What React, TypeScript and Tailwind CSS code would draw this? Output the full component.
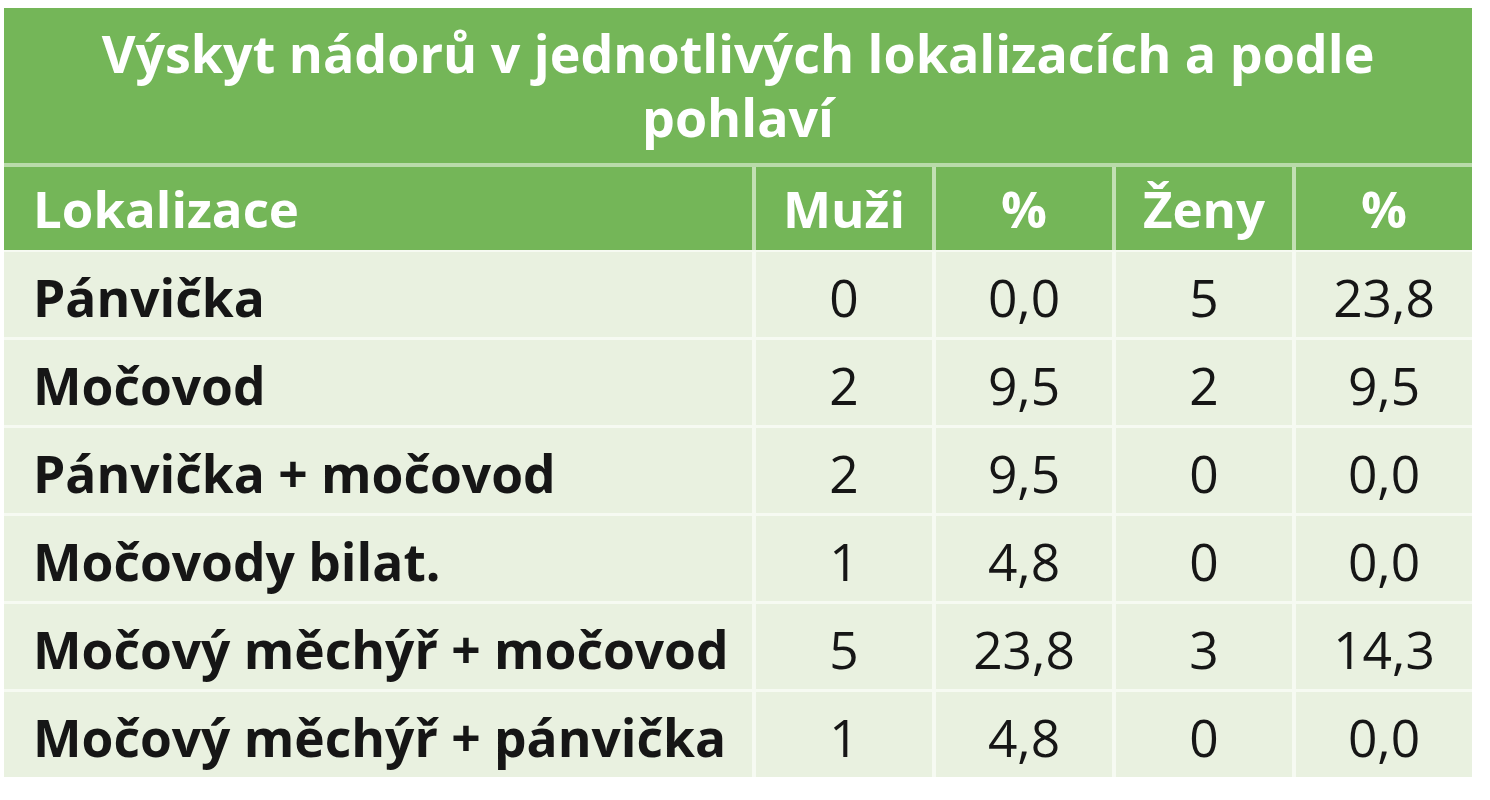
const rows = [
  { name: 'Pánvička', m: '0', mp: '0,0', z: '5', zp: '23,8' },
  { name: 'Močovod', m: '2', mp: '9,5', z: '2', zp: '9,5' },
  { name: 'Pánvička + močovod', m: '2', mp: '9,5', z: '0', zp: '0,0' },
  { name: 'Močovody bilat.', m: '1', mp: '4,8', z: '0', zp: '0,0' },
  { name: 'Močový měchýř + močovod', m: '5', mp: '23,8', z: '3', zp: '14,3' },
  { name: 'Močový měchýř + pánvička', m: '1', mp: '4,8', z: '0', zp: '0,0' },
];

const cols = 'grid grid-cols-[748px_176px_176px_176px_176px] gap-x-[4px]';

const App = () => {
  return (
    <div className="w-[1490px] h-[800px] bg-white pt-[8px] pl-[4px] font-['Open_Sans',sans-serif]">
      <div className="w-[1468px] flex flex-col">
        <div className="h-[155px] bg-[#74b658] text-white font-bold text-[52px] leading-[64px] text-center pt-[13px] px-[40px]">
          Výskyt nádorů v jednotlivých lokalizacích a podle pohlaví
        </div>
        <div className="h-[4px] bg-[#b9dbaa]"></div>
        <div className={`${cols} bg-[#c2e0b4]`}>
          {['Lokalizace', 'Muži', '%', 'Ženy', '%'].map((h, i) => (
            <div
              key={i}
              className={`h-[83px] bg-[#74b658] text-white font-bold text-[51px] flex items-center ${
                i === 0 ? 'pl-[29px]' : 'justify-center'
              }`}
            >
              {h}
            </div>
          ))}
        </div>
        <div className={`${cols} gap-y-[3px] bg-[#f6faf2] pt-[2px]`}>
          {rows.map((r, idx) => (
            <>
              <div
                key={`n${idx}`}
                className="h-[85px] bg-[#e9f1e0] text-[#161616] font-bold text-[51.5px] flex items-center pl-[29px] pt-[6px]"
              >
                {r.name}
              </div>
              {[r.m, r.mp, r.z, r.zp].map((v, j) => (
                <div
                  key={`v${idx}-${j}`}
                  className="h-[85px] bg-[#e9f1e0] text-[#161616] text-[51.5px] flex items-center justify-center pt-[6px]"
                >
                  {v}
                </div>
              ))}
            </>
          ))}
        </div>
      </div>
    </div>
  );
};

export default App;
